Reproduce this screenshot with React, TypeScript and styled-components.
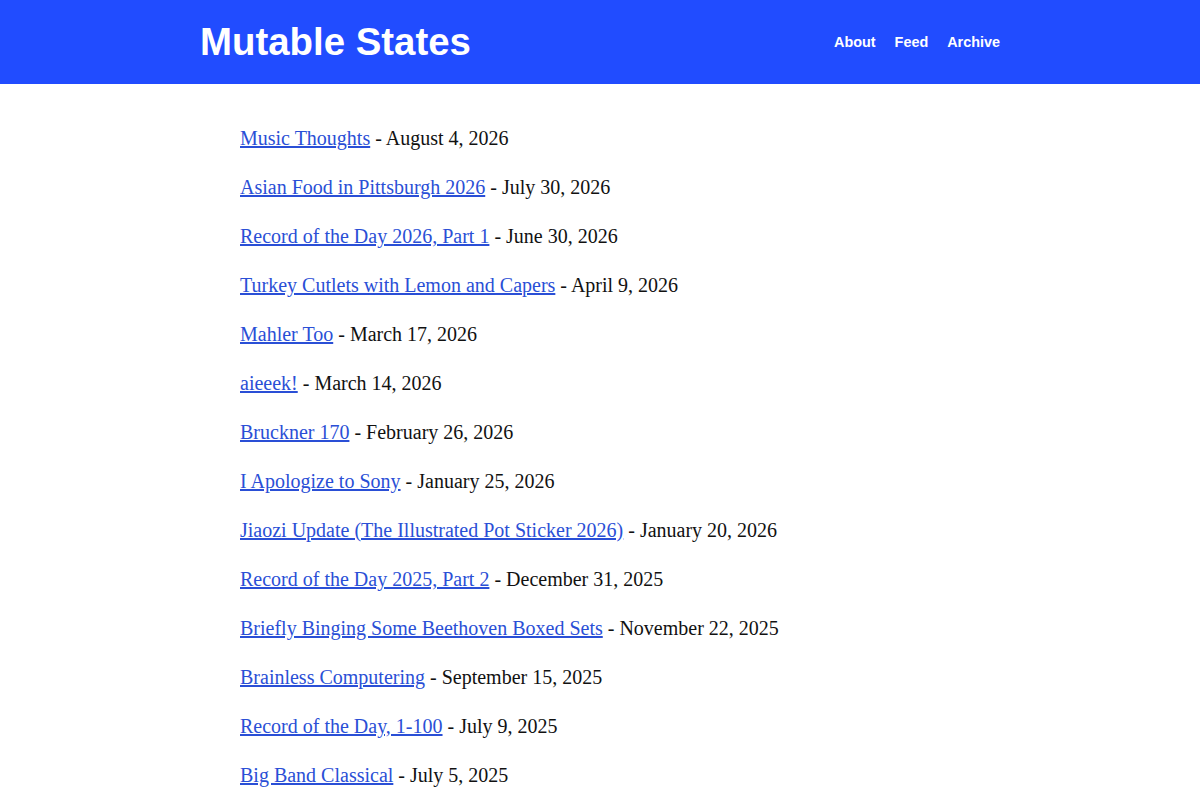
import React from 'react';
import styled, { createGlobalStyle } from 'styled-components';

const POSTS = [
  { title: 'Music Thoughts', date: 'August 4, 2026' },
  { title: 'Asian Food in Pittsburgh 2026', date: 'July 30, 2026' },
  { title: 'Record of the Day 2026, Part 1', date: 'June 30, 2026' },
  { title: 'Turkey Cutlets with Lemon and Capers', date: 'April 9, 2026' },
  { title: 'Mahler Too', date: 'March 17, 2026' },
  { title: 'aieeek!', date: 'March 14, 2026' },
  { title: 'Bruckner 170', date: 'February 26, 2026' },
  { title: 'I Apologize to Sony', date: 'January 25, 2026' },
  { title: 'Jiaozi Update (The Illustrated Pot Sticker 2026)', date: 'January 20, 2026' },
  { title: 'Record of the Day 2025, Part 2', date: 'December 31, 2025' },
  { title: 'Briefly Binging Some Beethoven Boxed Sets', date: 'November 22, 2025' },
  { title: 'Brainless Computering', date: 'September 15, 2025' },
  { title: 'Record of the Day, 1-100', date: 'July 9, 2025' },
  { title: 'Big Band Classical', date: 'July 5, 2025' },
];

const GlobalStyle = createGlobalStyle`
  body {
    margin: 0;
    background: #ffffff;
    font-family: "Liberation Serif", "Times New Roman", serif;
    color: #111111;
  }
`;

const App: React.FC = () => {
  return (
    <SPage>
      <GlobalStyle />
      <SHeader>
        <SHeaderInner>
          <STitle href="#">Mutable States</STitle>
          <SNav>
            <SNavLink href="#">About</SNavLink>
            <SNavLink href="#">Feed</SNavLink>
            <SNavLink href="#">Archive</SNavLink>
          </SNav>
        </SHeaderInner>
      </SHeader>
      <SMain>
        <SPostList>
          {POSTS.map((post) => (
            <SPostItem key={post.title}>
              <SPostLink href="#">{post.title}</SPostLink> - {post.date}
            </SPostItem>
          ))}
        </SPostList>
      </SMain>
    </SPage>
  );
};

const SPage = styled.div`
  width: 100%;
  min-height: 100vh;
`;

const SHeader = styled.header`
  width: 100%;
  height: 84px;
  background: #214cff;
`;

const SHeaderInner = styled.div`
  display: flex;
  align-items: center;
  justify-content: space-between;

  width: 800px;
  height: 100%;
  margin: 0 auto;
`;

const STitle = styled.a`
  font-family: "Liberation Sans", Arial, sans-serif;
  font-size: 38.4px;
  font-weight: 700;
  color: #ffffff;
  text-decoration: none;
`;

const SNav = styled.nav`
  display: flex;
  align-items: center;
  gap: 19px;
`;

const SNavLink = styled.a`
  font-family: "Liberation Sans", Arial, sans-serif;
  font-size: 14.4px;
  font-weight: 700;
  color: #ffffff;
  text-decoration: none;
`;

const SMain = styled.main`
  width: 800px;
  margin: 0 auto;
`;

const SPostList = styled.ul`
  list-style: none;
  margin: 0;
  padding: 42px 0 0 40px;
`;

const SPostItem = styled.li`
  font-size: 20px;
  line-height: 24px;
  margin-bottom: 25px;
`;

const SPostLink = styled.a`
  color: #2a4fd6;
  text-decoration: underline;
`;

export default App;
